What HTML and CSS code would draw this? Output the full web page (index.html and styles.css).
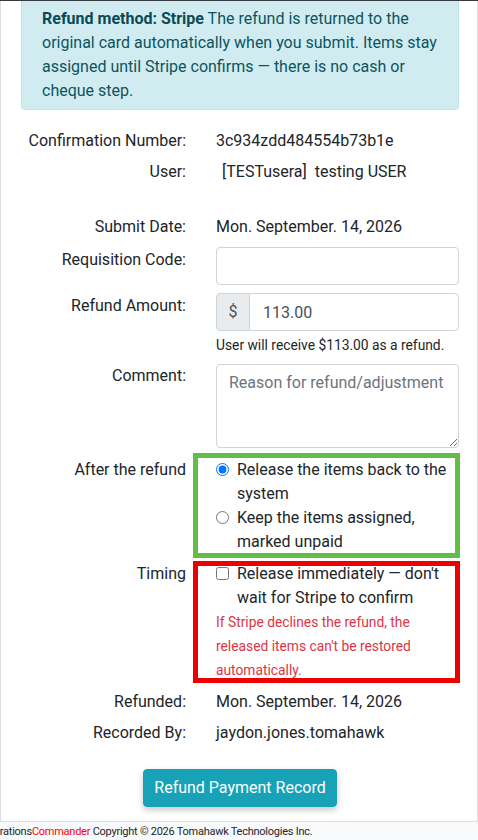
FILE: index.html
```html
<!DOCTYPE html>
<html lang="en">
<head>
<meta charset="utf-8">
<title>Refund Payment Record</title>
<link rel="stylesheet" href="styles.css">
</head>
<body>
<div class="topbar"></div>
<main class="card">
  <div class="alert"><strong>Refund method: Stripe</strong> The refund is returned to the original card automatically when you submit. Items stay assigned until Stripe confirms — there is no cash or cheque step.</div>

  <div class="fields">
    <div class="row first mb7">
      <span class="lbl">Confirmation Number:</span>
      <span class="val">3c934zdd484554b73b1e</span>
    </div>
    <div class="row mb31">
      <span class="lbl">User:</span>
      <span class="val user">[TESTusera]&nbsp; testing USER</span>
    </div>
    <div class="row mb8">
      <span class="lbl">Submit Date:</span>
      <span class="val">Mon. September. 14, 2026</span>
    </div>
    <div class="row mb8">
      <label class="lbl lbl-field" for="req">Requisition Code:</label>
      <div class="val"><input id="req" class="input" type="text"></div>
    </div>
    <div class="row mb9">
      <label class="lbl lbl-field" for="amt">Refund Amount:</label>
      <div class="val">
        <div class="input-group">
          <span class="addon">$</span>
          <input id="amt" class="input input-grouped" type="text" value="113.00">
        </div>
        <div class="help">User will receive $113.00 as a refund.</div>
      </div>
    </div>
    <div class="row mb10">
      <label class="lbl" for="cmt">Comment:</label>
      <div class="val"><textarea id="cmt" class="input textarea" placeholder="Reason for refund/adjustment"></textarea></div>
    </div>
    <div class="row mb8">
      <span class="lbl">After the refund</span>
      <div class="val boxed boxed-green">
        <label class="opt"><input type="radio" name="after" checked><span>Release the items back to the system</span></label>
        <label class="opt"><input type="radio" name="after"><span>Keep the items assigned, marked unpaid</span></label>
      </div>
    </div>
    <div class="row mb8">
      <span class="lbl">Timing</span>
      <div class="val boxed boxed-red">
        <label class="opt"><input type="checkbox"><span>Release immediately — don't wait for Stripe to confirm</span></label>
        <div class="danger">If Stripe declines the refund, the released items can't be restored automatically.</div>
      </div>
    </div>
    <div class="row mb7">
      <span class="lbl">Refunded:</span>
      <span class="val">Mon. September. 14, 2026</span>
    </div>
    <div class="row">
      <span class="lbl">Recorded By:</span>
      <span class="val">jaydon.jones.tomahawk</span>
    </div>
  </div>

  <div class="actions">
    <button class="btn" type="button">Refund Payment Record</button>
  </div>
</main>
<footer class="footer"><span class="brand">Operations<span class="brand-red">Commander</span></span> Copyright © 2026 Tomahawk Technologies Inc.</footer>
</body>
</html>
```
FILE: styles.css
```css
html, body {
  margin: 0;
  padding: 0;
  background: #ffffff;
}
body {
  font-family: Roboto, "Liberation Sans", sans-serif;
  font-size: 16px;
  line-height: 24px;
  color: #212529;
  overflow: hidden;
}
.topbar {
  height: 1px;
  background: #343a40;
}
.card {
  box-sizing: border-box;
  width: 478px;
  border-left: 1px solid #dcdfe2;
  border-right: 1px solid #dcdfe2;
  border-bottom: 1px solid #dcdfe2;
  padding: 0 18px 14px 20px;
}
.alert {
  background: #d1ecf1;
  border: 1px solid #bee5eb;
  border-top: 0;
  border-radius: 0 0 4px 4px;
  color: #0c5460;
  padding: 6px 20px 6px 20px;
}
.alert strong {
  font-weight: 700;
  color: #0b4a55;
}
.fields {
  display: flex;
  flex-direction: column;
}
.row {
  display: grid;
  grid-template-columns: 165px 243px;
  column-gap: 30px;
  align-items: start;
}
.first { margin-top: 19px; }
.mb7 { margin-bottom: 7px; }
.mb8 { margin-bottom: 8px; }
.mb9 { margin-bottom: 9px; }
.mb10 { margin-bottom: 10px; }
.mb31 { margin-bottom: 31px; }
.lbl {
  text-align: right;
  white-space: nowrap;
}
.lbl-field {
  padding-top: 1px;
}
.val {
  min-width: 0;
}
.user {
  padding-left: 6px;
}
.input {
  box-sizing: border-box;
  display: block;
  width: 100%;
  height: 38px;
  margin: 0;
  padding: 6px 12px;
  border: 1px solid #ced4da;
  border-radius: 4px;
  background: #ffffff;
  font-family: inherit;
  font-size: 16px;
  line-height: 24px;
  color: #495057;
  outline: none;
}
.input-group {
  display: flex;
}
.addon {
  box-sizing: border-box;
  width: 34px;
  height: 38px;
  flex: none;
  padding: 6px 0;
  text-align: center;
  background: #e9ecef;
  border: 1px solid #ced4da;
  border-radius: 4px 0 0 4px;
  color: #495057;
}
.input-grouped {
  flex: 1;
  width: auto;
  min-width: 0;
  margin-left: -1px;
  padding-left: 13px;
  border-radius: 0 4px 4px 0;
}
.help {
  margin-top: 4px;
  font-size: 13.8px;
  line-height: 20px;
  color: #212529;
  white-space: nowrap;
}
.textarea {
  height: 84px;
  resize: vertical;
}
.textarea::placeholder {
  color: #6c757d;
  opacity: 1;
}
.boxed {
  position: relative;
}
.boxed::after {
  content: "";
  position: absolute;
  pointer-events: none;
  border: 5px solid;
}
.boxed-green::after {
  top: -5px;
  bottom: -4px;
  left: -23px;
  right: -1px;
  border-color: #63be48;
}
.boxed-red::after {
  top: -1px;
  bottom: -1px;
  left: -23px;
  right: -1px;
  border-color: #ec0000;
}
.opt {
  display: flex;
  align-items: flex-start;
  gap: 8px;
}
.opt input {
  flex: none;
  width: 13px;
  height: 13px;
  margin: 5px 0 0 0;
}
.danger {
  max-width: 232px;
  font-size: 13.8px;
  line-height: 24px;
  color: #dc3545;
}
.actions {
  display: flex;
  justify-content: center;
  margin-top: 24px;
}
.btn {
  height: 38px;
  padding: 6px 10px;
  border: 1px solid #17a2b8;
  border-radius: 4px;
  background: #17a2b8;
  color: #ffffff;
  font-family: inherit;
  font-size: 16px;
  line-height: 24px;
  box-shadow: 0 3px 6px rgba(0, 0, 0, 0.22);
  cursor: pointer;
}
.footer {
  background: #f8f9fa;
  padding: 1px 0 4px 0;
  font-size: 11px;
  letter-spacing: -0.25px;
  line-height: 18px;
  color: #212529;
  white-space: nowrap;
}
.brand {
  margin-left: -19px;
}
.brand-red {
  color: #ff0000;
}
```
